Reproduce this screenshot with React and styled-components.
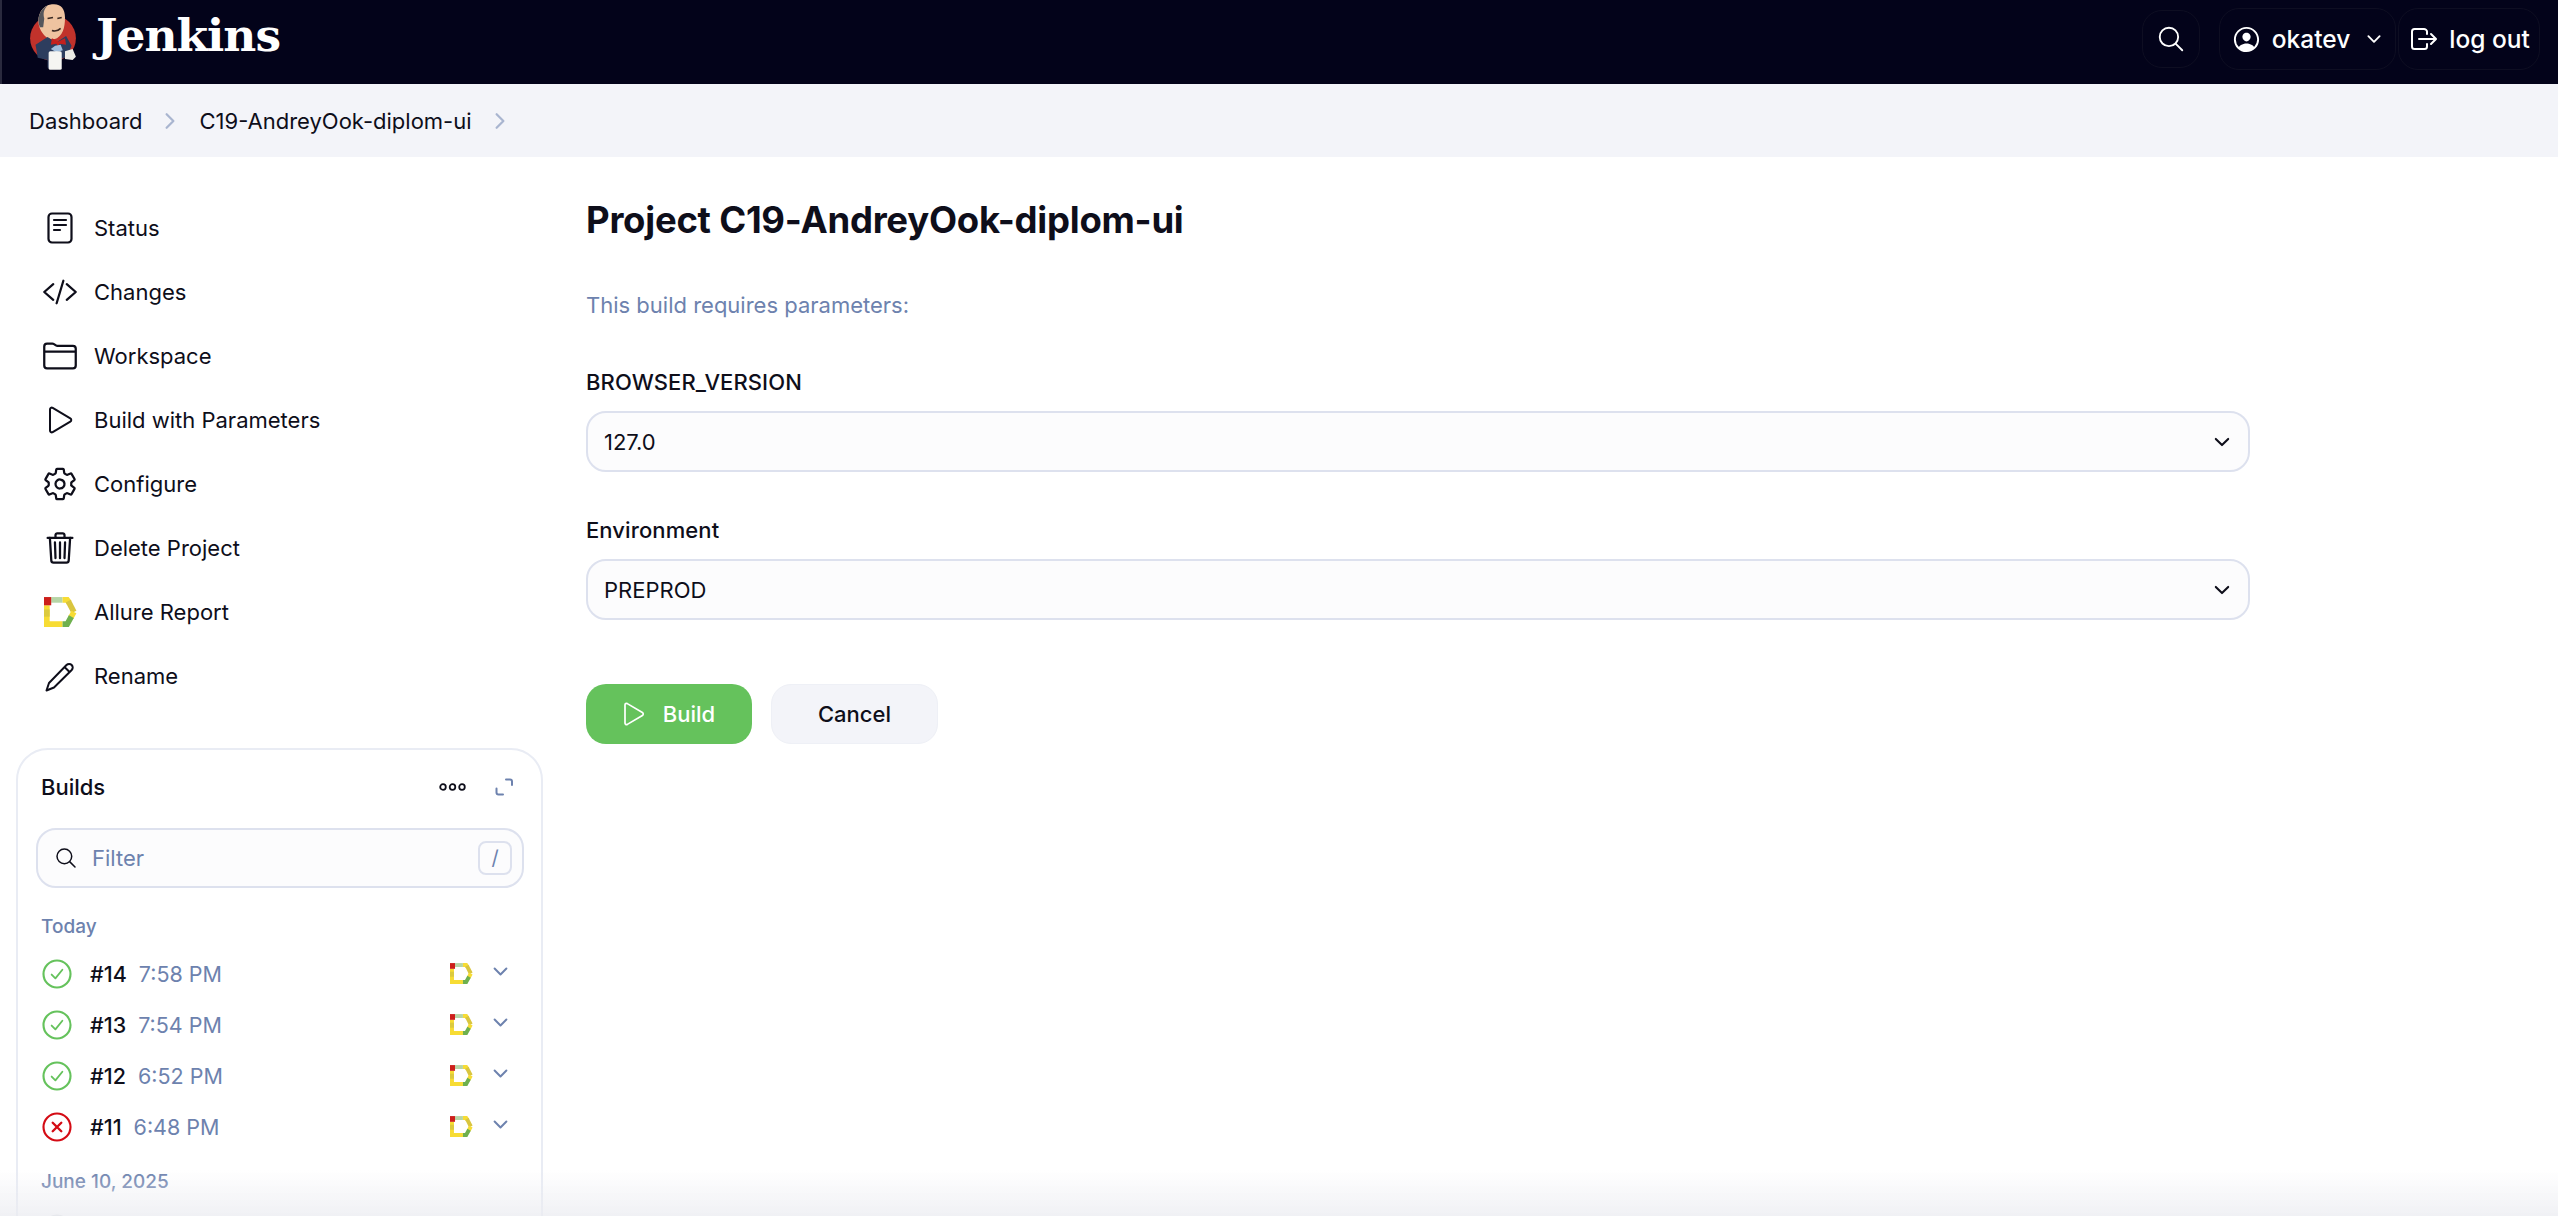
import React from 'react';
import styled, { createGlobalStyle } from 'styled-components';
import {
  IoCodeSlashOutline,
  IoFolderOutline,
  IoSettingsOutline,
  IoTrashOutline,
  IoSearchOutline,
  IoPersonCircleOutline,
  IoLogOutOutline,
  IoChevronDown,
  IoChevronForward,
} from 'react-icons/io5';

const ink = '#0e0e1a';
const muted = '#6d82ae';
const line = '#dde1ee';

const GlobalStyle = createGlobalStyle`
  html, body {
    margin: 0;
    height: 100%;
    overflow: hidden;
    background: #fff;
  }
  body {
    color: ${ink};
    font-family: Inter, "Liberation Sans", sans-serif;
    font-size: 22px;
  }
`;

const Page = styled.div`
  height: 1216px;
  overflow: hidden;
`;

const Header = styled.header`
  align-items: center;
  background: #03031a;
  border-left: 2px solid #2a2a3e;
  box-sizing: border-box;
  color: #fff;
  display: flex;
  height: 84px;
  justify-content: space-between;
  padding: 0 18px 0 27px;
`;

const Brand = styled.div`
  align-items: center;
  display: flex;
  gap: 19px;
  margin-top: -12px;
`;

const BrandName = styled.span`
  font-family: "DejaVu Serif", "Liberation Serif", serif;
  font-size: 45.5px;
  font-weight: 700;
  letter-spacing: -1px;
  line-height: 1;
`;

const HeaderActions = styled.div`
  align-items: center;
  display: flex;
  margin-top: -6px;
`;

const HeaderButton = styled.div`
  align-items: center;
  border: 1px solid #0e0e22;
  border-radius: 20px;
  box-sizing: border-box;
  display: flex;
  font-size: 24.5px;
  font-weight: 450;
  gap: ${props => props.$gap || 10}px;
  height: ${props => props.$height || 62}px;
  justify-content: center;
  margin-left: ${props => props.$left || 0}px;
  width: ${props => props.$width}px;
`;

const Breadcrumbs = styled.nav`
  align-items: center;
  background: #f3f4f9;
  display: flex;
  font-size: 22px;
  height: 73px;
  padding-left: 29px;
`;

const CrumbArrow = styled.span`
  color: #a9b5d0;
  display: flex;
  font-size: 24px;
  margin: 0 17px 0 16px;
`;

const Body = styled.div`
  display: flex;
`;

const Sidebar = styled.aside`
  box-sizing: border-box;
  flex: 0 0 586px;
  padding: 39px 0 0 16px;
`;

const TaskList = styled.ul`
  list-style: none;
  margin: 0 0 40px;
  padding: 0;
`;

const Task = styled.li`
  align-items: center;
  display: flex;
  height: 64px;
`;

const TaskIcon = styled.span`
  align-items: center;
  display: flex;
  flex: 0 0 36px;
  font-size: 36px;
  justify-content: center;
  margin: 0 16px 0 26px;
`;

const BuildsCard = styled.section`
  border: 2px solid #e9ecf4;
  border-radius: 32px;
  box-sizing: border-box;
  height: 560px;
  padding: 15px 17px 0 18px;
  width: 527px;
`;

const BuildsHead = styled.div`
  align-items: center;
  display: flex;
  height: 44px;
  justify-content: space-between;
  padding: 0 11px 0 5px;
`;

const BuildsTitle = styled.span`
  font-weight: 450;
`;

const BuildsTools = styled.div`
  align-items: center;
  display: flex;
  gap: 29px;
`;

const FilterBox = styled.label`
  align-items: center;
  background: #fcfcfd;
  border: 2px solid ${line};
  border-radius: 20px;
  box-sizing: border-box;
  display: flex;
  height: 60px;
  margin-top: 19px;
  padding: 0 10px 0 16px;
`;

const FilterInput = styled.input`
  background: transparent;
  border: 0;
  color: ${ink};
  flex: 1;
  font: inherit;
  margin-left: 14px;
  outline: 0;
  padding: 0;
  &::placeholder {
    color: ${muted};
    opacity: 1;
  }
`;

const Shortcut = styled.kbd`
  align-items: center;
  border: 2px solid ${line};
  border-radius: 8px;
  box-sizing: border-box;
  color: ${muted};
  display: flex;
  font-family: inherit;
  font-size: 20px;
  height: 34px;
  justify-content: center;
  width: 34px;
`;

const DateLabel = styled.div`
  color: ${muted};
  font-size: 19px;
  font-weight: 500;
  line-height: 24px;
  margin: ${props => props.$top}px 0 ${props => props.$bottom}px;
  padding-left: 5px;
`;

const BuildRow = styled.div`
  align-items: center;
  display: flex;
  height: 51px;
  padding: 0 13px 0 6px;
`;

const BuildNumber = styled.span`
  font-size: 21.5px;
  font-weight: 450;
  margin: 0 12px 0 18px;
`;

const BuildTime = styled.span`
  color: ${muted};
  flex: 1;
  font-size: 21.5px;
`;

const RowChevron = styled.span`
  color: ${muted};
  display: flex;
  font-size: 21px;
  margin: -4px 0 0 17px;
`;

const Main = styled.main`
  box-sizing: border-box;
  flex: 0 0 1664px;
  padding-top: 38px;
`;

const Title = styled.h1`
  font-size: 36.5px;
  font-weight: 700;
  letter-spacing: -0.25px;
  line-height: 50px;
  margin: 0;
`;

const Intro = styled.p`
  color: ${muted};
  line-height: 28px;
  margin: 46px 0 0;
`;

const Field = styled.div`
  margin-top: ${props => props.$top}px;
`;

const FieldLabel = styled.div`
  font-weight: 450;
  letter-spacing: 0.1px;
  line-height: 28px;
  margin-bottom: 15px;
`;

const SelectBox = styled.div`
  align-items: center;
  background: #fcfcfd;
  border: 2px solid ${line};
  border-radius: 20px;
  box-sizing: border-box;
  display: flex;
  height: 61px;
  justify-content: space-between;
  padding: 0 15px 0 16px;
`;

const Actions = styled.div`
  display: flex;
  gap: 19px;
  margin-top: 64px;
`;

const Button = styled.button`
  align-items: center;
  background: ${props => (props.$primary ? '#65c25c' : '#f3f4f9')};
  border: ${props => (props.$primary ? '0' : '1px solid #eef0f6')};
  border-radius: 20px;
  box-sizing: border-box;
  color: ${props => (props.$primary ? '#fff' : ink)};
  display: flex;
  font: inherit;
  font-weight: 450;
  gap: 18px;
  height: 60px;
  justify-content: center;
  padding: 0;
  width: ${props => props.$width}px;
`;

const BottomFade = styled.div`
  background: linear-gradient(to bottom, rgba(235, 236, 241, 0), rgba(235, 236, 241, 0.75));
  bottom: 0;
  height: 46px;
  left: 0;
  pointer-events: none;
  position: fixed;
  right: 0;
`;

const JenkinsLogo = () => (
  <svg width="48" height="70" viewBox="13 6 44 64">
    <circle cx="35" cy="40" r="21" fill="#c1322b" />
    <path d="M22 28c-2-9 3-18 12-19 8-1 12 4 12 12 0 9-2 18-10 20-6 1-12-5-14-13z" fill="#eec3a0" />
    <path d="M23 30c-3-7-1-16 7-20-4 4-4 8-3 12l-1 8z" fill="#55565c" />
    <path d="M30 22l5-1M39 22l4-1M34 33c3 1 6 0 8-2" stroke="#3a2a24" strokeWidth="1.4" fill="none" />
    <path d="M19 46l11-7 8 5 9-6 5 9-4 10-6 2v8H30v-7l-9-2-2-12z" fill="#2d3d5e" />
    <path d="M34 40l6 3 6-3 1 6-6-1-1 3-2-3-5 1z" fill="#c4201e" />
    <path d="M37 47l5-1 2 5-6 2-5-3z" fill="#9fbddc" />
    <rect x="31" y="52" width="12" height="17" rx="1.5" fill="#f5f5f2" />
    <path d="M46 52l7-2 3 7-3 3-7-1z" fill="#ecebe6" />
  </svg>
);

const StatusIcon = () => (
  <svg width="26" height="32" viewBox="0 0 26 32" fill="none" stroke="currentColor" strokeWidth="2.2" strokeLinecap="round">
    <rect x="1.5" y="1.5" width="23" height="29" rx="3.5" />
    <path d="M7 8h12M7 13h12M7 18h6" />
  </svg>
);

const PlayIcon = ({ width = 25, height = 28 }) => (
  <svg width={width} height={height} viewBox="0 0 25 28" fill="none" stroke="currentColor" strokeWidth="2" strokeLinejoin="round">
    <path d="M2 3.500c0-1.500 1.400-2.300 2.700-1.600l17.600 10.400c1.300.8 1.300 2.600 0 3.400L4.700 26.100C3.400 26.800 2 26 2 24.500z" />
  </svg>
);

const RenameIcon = () => (
  <svg width="31" height="31" viewBox="0 0 31 31" fill="none" stroke="currentColor" strokeWidth="2" strokeLinejoin="round">
    <path d="M1.500 29.500l2.500-7.500L21.500 4a3.600 3.600 0 0 1 5.200 0 3.600 3.600 0 0 1 0 5L9 26.500z" />
    <path d="M19.500 6l5.300 5.200" />
  </svg>
);

const AllureIcon = ({ width = 33, height = 30 }) => (
  <svg width={width} height={height} viewBox="0 0 32 29" fill="none" strokeWidth="5.5">
    <path d="M18 26.250H2.750V8" stroke="#f7dc34" />
    <path d="M2.750 19V12" stroke="#dcca3e" />
    <path d="M7 2.750H18" stroke="#b6d5a6" />
    <path d="M18 2.750H22.500L24.500 5.500" stroke="#f7dc34" />
    <path d="M23.500 4L29 14.500" stroke="#d9c53f" />
    <path d="M29 14.500L26 20" stroke="#f7dc34" />
    <path d="M26.500 19L22.500 26.250H18" stroke="#6eb04e" />
    <rect x="0" y="0" width="7" height="8" fill="#cc1f1a" stroke="none" />
  </svg>
);

const ResultIcon = ({ failed, faded }) => (
  <svg width="30" height="30" viewBox="0 0 28 28" fill="none" stroke={faded ? '#d8dade' : failed ? '#d40b14' : '#65c25c'} strokeWidth="2" strokeLinecap="round" strokeLinejoin="round">
    <circle cx="14" cy="14" r="12.6" />
    {failed ? <path d="M10 10l8 8M18 10l-8 8" strokeWidth="2.2" /> : <path d="M9 14.500l3.500 3.600L19 10" strokeWidth="1.7" />}
  </svg>
);

const MoreIcon = () => (
  <svg width="27" height="10" viewBox="0 0 27 10" fill="none" stroke={ink} strokeWidth="1.8">
    <circle cx="4" cy="5" r="2.800" />
    <circle cx="13.500" cy="5" r="2.800" />
    <circle cx="23" cy="5" r="2.800" />
  </svg>
);

const ExpandIcon = () => (
  <svg width="18" height="18" viewBox="0 0 18 18" fill="none" stroke={muted} strokeWidth="2" strokeLinecap="round" strokeLinejoin="round">
    <path d="M11 1.500h4a2 2 0 0 1 2 2v3.500M1.500 10.500v4a2 2 0 0 0 2 2h4.500" />
  </svg>
);

const tasks = [
  { label: 'Status', icon: <StatusIcon /> },
  { label: 'Changes', icon: <IoCodeSlashOutline /> },
  { label: 'Workspace', icon: <IoFolderOutline /> },
  { label: 'Build with Parameters', icon: <PlayIcon /> },
  { label: 'Configure', icon: <IoSettingsOutline /> },
  { label: 'Delete Project', icon: <IoTrashOutline /> },
  { label: 'Allure Report', icon: <AllureIcon /> },
  { label: 'Rename', icon: <RenameIcon /> },
];

const builds = [
  { id: '#14', time: '7:58 PM' },
  { id: '#13', time: '7:54 PM' },
  { id: '#12', time: '6:52 PM' },
  { id: '#11', time: '6:48 PM', failed: true },
];

export default function App() {
  return (
    <Page>
      <GlobalStyle />
      <Header>
        <Brand>
          <JenkinsLogo />
          <BrandName>Jenkins</BrandName>
        </Brand>
        <HeaderActions>
          <HeaderButton $width={58} $height={58}>
            <IoSearchOutline size={30} />
          </HeaderButton>
          <HeaderButton $width={177} $left={19}>
            <IoPersonCircleOutline size={31} />
            okatev
            <IoChevronDown size={20} style={{ marginLeft: 4 }} />
          </HeaderButton>
          <HeaderButton $width={142} $left={2} $gap={9}>
            <IoLogOutOutline size={32} />
            log out
          </HeaderButton>
        </HeaderActions>
      </Header>

      <Breadcrumbs>
        <span>Dashboard</span>
        <CrumbArrow><IoChevronForward /></CrumbArrow>
        <span>C19-AndreyOok-diplom-ui</span>
        <CrumbArrow><IoChevronForward /></CrumbArrow>
      </Breadcrumbs>

      <Body>
        <Sidebar>
          <TaskList>
            {tasks.map(task => (
              <Task key={task.label}>
                <TaskIcon>{task.icon}</TaskIcon>
                {task.label}
              </Task>
            ))}
          </TaskList>

          <BuildsCard>
            <BuildsHead>
              <BuildsTitle>Builds</BuildsTitle>
              <BuildsTools>
                <MoreIcon />
                <ExpandIcon />
              </BuildsTools>
            </BuildsHead>
            <FilterBox>
              <IoSearchOutline size={24} />
              <FilterInput placeholder="Filter" readOnly />
              <Shortcut>/</Shortcut>
            </FilterBox>
            <DateLabel $top={27} $bottom={9}>Today</DateLabel>
            {builds.map(build => (
              <BuildRow key={build.id}>
                <ResultIcon failed={build.failed} />
                <BuildNumber>{build.id}</BuildNumber>
                <BuildTime>{build.time}</BuildTime>
                <AllureIcon width={23} height={21} />
                <RowChevron><IoChevronDown /></RowChevron>
              </BuildRow>
            ))}
            <DateLabel $top={18} $bottom={9}>June 10, 2025</DateLabel>
            <BuildRow>
              <ResultIcon faded />
            </BuildRow>
          </BuildsCard>
        </Sidebar>

        <Main>
          <Title>Project C19-AndreyOok-diplom-ui</Title>
          <Intro>This build requires parameters:</Intro>
          <Field $top={49}>
            <FieldLabel>BROWSER_VERSION</FieldLabel>
            <SelectBox>
              127.0
              <IoChevronDown size={22} />
            </SelectBox>
          </Field>
          <Field $top={44}>
            <FieldLabel>Environment</FieldLabel>
            <SelectBox>
              PREPROD
              <IoChevronDown size={22} />
            </SelectBox>
          </Field>
          <Actions>
            <Button $primary $width={166}>
              <PlayIcon width={22} height={24} />
              Build
            </Button>
            <Button $width={167}>Cancel</Button>
          </Actions>
        </Main>
      </Body>
      <BottomFade />
    </Page>
  );
}
